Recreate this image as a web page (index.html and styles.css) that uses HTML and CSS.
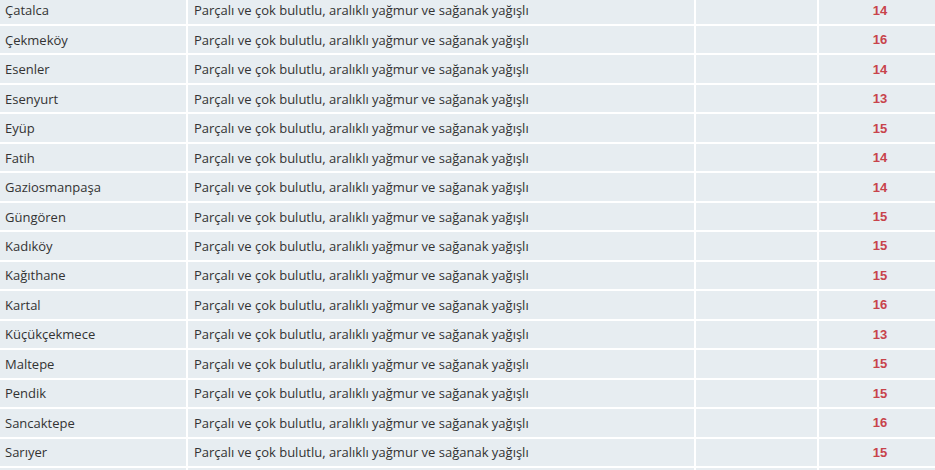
FILE: index.html
```html
<!DOCTYPE html>
<html lang="tr">
<head>
<meta charset="utf-8">
<link rel="stylesheet" href="styles.css">
</head>
<body>
<div class="table">
  <div class="row"><div class="c name">Çatalca</div><div class="c desc">Parçalı ve çok bulutlu, aralıklı yağmur ve sağanak yağışlı</div><div class="c"></div><div class="c num">14</div></div>
  <div class="row"><div class="c name">Çekmeköy</div><div class="c desc">Parçalı ve çok bulutlu, aralıklı yağmur ve sağanak yağışlı</div><div class="c"></div><div class="c num">16</div></div>
  <div class="row"><div class="c name">Esenler</div><div class="c desc">Parçalı ve çok bulutlu, aralıklı yağmur ve sağanak yağışlı</div><div class="c"></div><div class="c num">14</div></div>
  <div class="row"><div class="c name">Esenyurt</div><div class="c desc">Parçalı ve çok bulutlu, aralıklı yağmur ve sağanak yağışlı</div><div class="c"></div><div class="c num">13</div></div>
  <div class="row"><div class="c name">Eyüp</div><div class="c desc">Parçalı ve çok bulutlu, aralıklı yağmur ve sağanak yağışlı</div><div class="c"></div><div class="c num">15</div></div>
  <div class="row"><div class="c name">Fatih</div><div class="c desc">Parçalı ve çok bulutlu, aralıklı yağmur ve sağanak yağışlı</div><div class="c"></div><div class="c num">14</div></div>
  <div class="row"><div class="c name">Gaziosmanpaşa</div><div class="c desc">Parçalı ve çok bulutlu, aralıklı yağmur ve sağanak yağışlı</div><div class="c"></div><div class="c num">14</div></div>
  <div class="row"><div class="c name">Güngören</div><div class="c desc">Parçalı ve çok bulutlu, aralıklı yağmur ve sağanak yağışlı</div><div class="c"></div><div class="c num">15</div></div>
  <div class="row"><div class="c name">Kadıköy</div><div class="c desc">Parçalı ve çok bulutlu, aralıklı yağmur ve sağanak yağışlı</div><div class="c"></div><div class="c num">15</div></div>
  <div class="row"><div class="c name">Kağıthane</div><div class="c desc">Parçalı ve çok bulutlu, aralıklı yağmur ve sağanak yağışlı</div><div class="c"></div><div class="c num">15</div></div>
  <div class="row"><div class="c name">Kartal</div><div class="c desc">Parçalı ve çok bulutlu, aralıklı yağmur ve sağanak yağışlı</div><div class="c"></div><div class="c num">16</div></div>
  <div class="row"><div class="c name">Küçükçekmece</div><div class="c desc">Parçalı ve çok bulutlu, aralıklı yağmur ve sağanak yağışlı</div><div class="c"></div><div class="c num">13</div></div>
  <div class="row"><div class="c name">Maltepe</div><div class="c desc">Parçalı ve çok bulutlu, aralıklı yağmur ve sağanak yağışlı</div><div class="c"></div><div class="c num">15</div></div>
  <div class="row"><div class="c name">Pendik</div><div class="c desc">Parçalı ve çok bulutlu, aralıklı yağmur ve sağanak yağışlı</div><div class="c"></div><div class="c num">15</div></div>
  <div class="row"><div class="c name">Sancaktepe</div><div class="c desc">Parçalı ve çok bulutlu, aralıklı yağmur ve sağanak yağışlı</div><div class="c"></div><div class="c num">16</div></div>
  <div class="row"><div class="c name">Sarıyer</div><div class="c desc">Parçalı ve çok bulutlu, aralıklı yağmur ve sağanak yağışlı</div><div class="c"></div><div class="c num">15</div></div>
  <div class="row"><div class="c"></div><div class="c"></div><div class="c"></div><div class="c"></div></div>
</div>
</body>
</html>
```
FILE: styles.css
```css
html, body {
  margin: 0;
  padding: 0;
  background: #ffffff;
  overflow: hidden;
}
.table {
  display: grid;
  grid-template-columns: 186px 506px 121px 122px;
  grid-auto-rows: 27.47px;
  gap: 2px;
  margin-top: -3.5px;
  width: 941px;
  font-family: "Open Sans", "Liberation Sans", sans-serif;
  font-size: 13px;
  color: #333333;
}
.row {
  display: contents;
}
.c {
  background: #e7edf1;
  display: flex;
  align-items: center;
  padding: 0 5px;
  white-space: nowrap;
  overflow: hidden;
}
.desc {
  padding-left: 6px;
}
.num {
  justify-content: center;
  font-family: "Liberation Sans", Arial, sans-serif;
  font-weight: bold;
  color: #c8434b;
}
```
